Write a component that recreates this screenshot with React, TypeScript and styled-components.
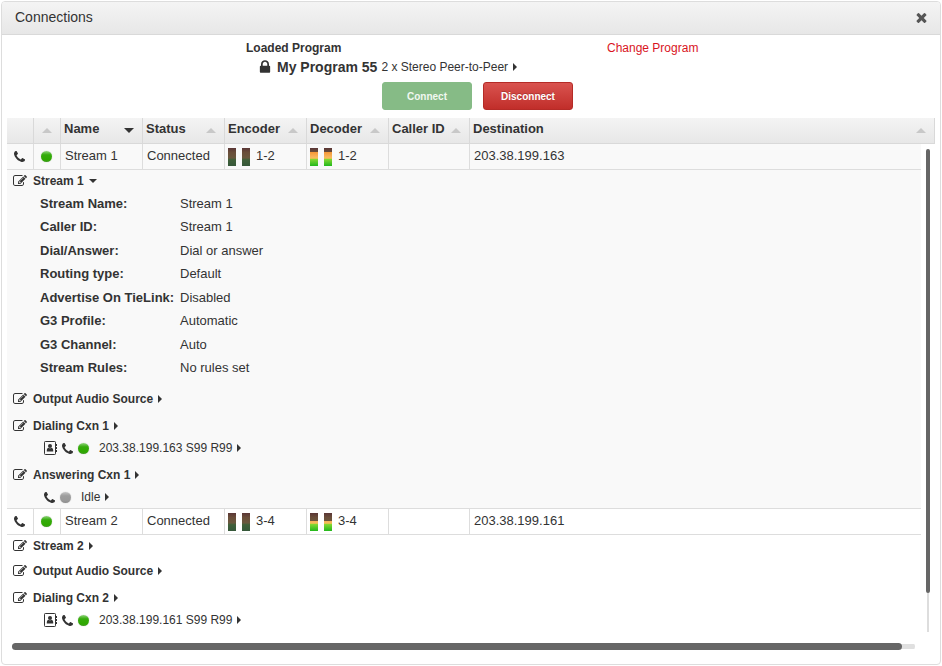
import React from "react";
import styled, { createGlobalStyle, css } from "styled-components";

const GlobalStyle = createGlobalStyle`
  *, *::before, *::after { box-sizing: border-box; }
  body {
    margin: 0;
    background: #fff;
    color: #333;
    font-family: "Liberation Sans", Arial, sans-serif;
    font-size: 12px;
    line-height: 20px;
  }
  button { font-family: inherit; cursor: pointer; }
`;

const Panel = styled.section`
  display: flex;
  flex-direction: column;
  min-height: calc(100vh - 2px);
  margin: 1px;
  border: 1px solid #ddd;
  border-radius: 4px;
  background: #fff;
`;

const TitleBar = styled.header`
  display: flex;
  align-items: center;
  justify-content: space-between;
  height: 33px;
  padding: 0 11px 2px 13px;
  border-bottom: 1px solid #d9d9d9;
  border-radius: 3px 3px 0 0;
  background: linear-gradient(#f4f4f4, #e7e7e7);
`;

const Title = styled.h1`
  margin: 0;
  font-size: 14px;
  font-weight: 400;
`;

const IconButton = styled.button`
  display: inline-flex;
  align-items: center;
  padding: 0;
  border: 0;
  background: none;
  color: inherit;
`;

const CloseButton = styled(IconButton)`
  color: #555;
`;

const ProgramArea = styled.div`
  display: grid;
  grid-template-columns: 361fr 333fr;
  padding: 3px 0 8px 244px;
`;

const ProgramLabel = styled.div`
  font-weight: 700;
`;

const ChangeLink = styled.a`
  justify-self: start;
  color: #d9141e;
  text-decoration: none;
`;

const ProgramLine = styled.div`
  display: flex;
  align-items: center;
  grid-column: 1 / -1;
  height: 18px;
  padding-left: 11px;
`;

const ProgramName = styled.strong`
  margin: 0 4px 0 4px;
  font-size: 14px;
`;

const ButtonRow = styled.div`
  display: flex;
  gap: 11px;
  grid-column: 1 / -1;
  padding: 6px 0 0 136px;
`;

const ActionButton = styled.button<{ $tone: "go" | "stop" }>`
  width: 90px;
  height: 28px;
  padding: 0;
  border-radius: 3px;
  color: #fff;
  font-size: 10px;
  font-weight: 700;
  ${({ $tone }) =>
    $tone === "go"
      ? css`
          border: 1px solid #86bb86;
          background: #86bb86;
          color: #f0f8f0;
        `
      : css`
          border: 1px solid #b52b27;
          background: linear-gradient(#d9534f, #c12e2a);
          text-shadow: 0 -1px 0 rgba(0, 0, 0, 0.2);
        `}
`;

const TableArea = styled.div`
  display: flex;
  flex: 1;
  flex-direction: column;
  padding: 0 5px 14px 5px;
`;

const Table = styled.table`
  width: 100%;
  border-collapse: separate;
  border-spacing: 0;
  table-layout: fixed;
  font-size: 13px;
`;

const HeadCell = styled.th`
  height: 26px;
  padding: 0 8px 4px 3px;
  border-right: 1px solid #d9d9d9;
  border-bottom: 1px solid #d9d9d9;
  background: linear-gradient(#f4f4f4, #e7e7e7);
  text-align: left;
  white-space: nowrap;
`;

const HeadContent = styled.div`
  display: flex;
  align-items: center;
  justify-content: space-between;
  height: 20px;
`;

const SortMark = styled.span<{ $active?: boolean }>`
  width: 0;
  height: 0;
  margin: 3px 0 0 auto;
  border: 5px solid transparent;
  ${({ $active }) =>
    $active
      ? css`
          border-top-color: #333;
          border-bottom-width: 0;
        `
      : css`
          border-bottom-color: #c8c8c8;
          border-top-width: 0;
        `}
`;

const Viewport = styled.div`
  display: flex;
  flex: 1;
  gap: 5px;
`;

const Rows = styled.div`
  flex: 1;
  min-width: 0;
`;

const Row = styled.tr<{ $shaded?: boolean }>`
  background: ${({ $shaded }) => ($shaded ? "#f9f9f9" : "#fff")};
`;

const Cell = styled.td`
  height: 26px;
  padding: 0 4px 2px;
  border-right: 1px solid #ddd;
  border-bottom: 1px solid #ddd;
  white-space: nowrap;
  &:last-child { border-right: 0; }
`;

const MeterCell = styled(Cell)`
  padding-left: 3px;
`;

const IconCell = styled(Cell)`
  padding: 0 1px 0 0;
  text-align: center;
  line-height: 0;
`;

const DetailCell = styled.td`
  padding: 0 6px;
  border-bottom: 1px solid #ddd;
  tr:last-child > & { border-bottom: 0; }
`;

const Lamp = styled.span<{ $on?: boolean }>`
  display: inline-block;
  flex: none;
  width: 11px;
  height: 11px;
  border-radius: 50%;
  background: ${({ $on }) =>
    $on
      ? "linear-gradient(#8fd47a 0, #35ab0c 35%, #2fa800 80%, #3f9c22)"
      : "linear-gradient(#c4c4c4 0, #9d9d9d 35%, #999 80%, #8c8c8c)"};
  box-shadow: 0 0 1px #aaa;
`;

const Meters = styled.span`
  display: flex;
  align-items: center;
  gap: 6px;
`;

const Meter = styled.span<{ $level: number }>`
  width: 8px;
  height: 18px;
  margin-top: 2px;
  background: linear-gradient(#f59a3a 25%, #f8b860 52%, #e8c24c 58%, #86d834 62%, #22b81c);
  &::before {
    content: "";
    display: block;
    height: ${({ $level }) => 100 - $level}%;
    background: linear-gradient(#5a3636, #6a4e3a 25%, #6a583e 55%, #40603a 65%, #36583a) top / 100% 18px no-repeat;
  }
`;

const Section = styled.div<{ $top: number }>`
  display: flex;
  align-items: center;
  gap: 6px;
  height: 22px;
  margin-top: ${({ $top }) => $top}px;
  font-size: 12px;
`;

const Toggle = styled.button`
  display: inline-flex;
  align-items: center;
  gap: 5px;
  padding: 0;
  border: 0;
  background: none;
  color: inherit;
  font-size: 12px;
  font-weight: 700;
  line-height: 20px;
`;

const PlainToggle = styled(Toggle)`
  font-weight: 400;
`;

const Connection = styled.div`
  display: flex;
  align-items: center;
  gap: 5px;
  height: 22px;
  padding-left: 31px;
`;

const Address = styled(PlainToggle)`
  margin-left: 5px;
`;

const Caret = styled.span<{ $open?: boolean }>`
  width: 0;
  height: 0;
  border: 4px solid transparent;
  ${({ $open }) =>
    $open
      ? css`
          border-top-color: currentColor;
          border-bottom-width: 0;
        `
      : css`
          border-left-color: currentColor;
          border-right-width: 0;
        `}
`;

const Properties = styled.dl`
  display: grid;
  grid-template-columns: 140px 1fr;
  grid-auto-rows: 1fr;
  align-items: center;
  min-height: 188px;
  margin: 0 0 0 27px;
  font-size: 13px;
`;

const Term = styled.dt`
  font-weight: 700;
`;

const Value = styled.dd`
  margin: 0;
`;

const VerticalTrack = styled.div`
  display: flex;
  flex: none;
  justify-content: center;
  width: 4px;
  margin: 5px 5px 0 0;
  background: linear-gradient(#ddd, #ddd) center / 2px 100% no-repeat;
`;

const VerticalThumb = styled.div`
  width: 4px;
  height: 92%;
  border-radius: 2px;
  background: #666;
`;

const HorizontalTrack = styled.div`
  height: 7px;
  margin: 11px 20px 0 5px;
  border-radius: 4px;
  background: linear-gradient(#e0e0e0, #e0e0e0) center / 100% 5px no-repeat;
`;

const HorizontalThumb = styled.div`
  width: calc(100% - 13px);
  height: 7px;
  border-radius: 4px;
  background: #666;
`;

const glyphs = {
  phone: {
    box: "192 128 1408 1408",
    path: "M1600 1240q0 27-10 70.5t-21 68.5q-21 50-122 106-94 51-186 51-27 0-53-3.5t-57.5-12.5-47-14.5-55.5-20.5-49-18q-98-35-175-83-127-79-264-216t-216-264q-48-77-83-175-3-9-18-49t-20.5-55.5-14.5-47-12.5-57.5-3.5-53q0-92 51-186 56-101 106-122 25-11 68.5-21t70.5-10q14 0 21 3 18 6 53 76 11 19 30 54t35 63.5 31 53.5q3 4 17.5 25t21.5 35.5 7 28.5q0 20-28.5 50t-62 55-62 53-28.5 46q0 9 5 22.5t8.5 20.5 14 24 11.5 19q76 137 174 235t235 174q2 1 19 11.5t24 14 20.5 8.5 22.5 5q18 0 46-28.5t53-62 55-62 50-28.5q14 0 28.5 7t35.5 21.5 25 17.5q25 15 53.5 31t63.5 35 54 30q70 35 76 53 3 7 3 21z",
  },
  edit: {
    box: "0 0 1792 1792",
    path: "M888 1184l116-116-152-152-116 116v56h96v96h56zm440-720q-16-16-33 1l-350 350q-17 17-1 33t33-1l350-350q17-17 1-33zm80 594v190q0 119-84.5 203.5t-203.5 84.5h-832q-119 0-203.5-84.5t-84.5-203.5v-832q0-119 84.5-203.5t203.5-84.5h832q63 0 117 25 15 7 18 23 3 17-9 29l-49 49q-14 14-32 8-23-6-45-6h-832q-66 0-113 47t-47 113v832q0 66 47 113t113 47h832q66 0 113-47t47-113v-126q0-13 9-22l64-64q15-15 35-7t20 29zm-96-738l288 288-672 672h-288v-288zm444 132l-92 92-288-288 92-92q28-28 68-28t68 28l152 152q28 28 28 68t-28 68z",
  },
  lock: {
    box: "0 0 1792 1792",
    path: "M640 768h512v-192q0-106-75-181t-181-75-181 75-75 181v192zm832 96v576q0 40-28 68t-68 28h-960q-40 0-68-28t-28-68v-576q0-40 28-68t68-28h32v-192q0-184 132-316t316-132 316 132 132 316v192h32q40 0 68 28t28 68z",
  },
  close: {
    box: "0 0 1792 1792",
    path: "M1490 1322q0 40-28 68l-136 136q-28 28-68 28t-68-28l-294-294-294 294q-28 28-68 28t-68-28l-136-136q-28-28-28-68t28-68l294-294-294-294q-28-28-28-68t28-68l136-136q28-28 68-28t68 28l294 294 294-294q28-28 68-28t68 28l136 136q28 28 28 68t-28 68l-294 294 294 294q28 28 28 68z",
  },
};

function Glyph({ name, size = 14 }: { name: keyof typeof glyphs; size?: number }) {
  return (
    <svg width={size} height={size} viewBox={glyphs[name].box} fill="currentColor" aria-hidden="true">
      <path d={glyphs[name].path} />
    </svg>
  );
}

function AddressBook() {
  return (
    <svg width="13" height="14" viewBox="0 0 13 14" aria-hidden="true">
      <rect x="0.5" y="0.5" width="11" height="13" rx="0.8" fill="none" stroke="#333" />
      <path d="M12 3h1v2h-1zM12 6h1v2h-1zM12 9h1v2h-1z" fill="#333" />
      <circle cx="6" cy="5" r="2" fill="#333" />
      <path d="M2.8 10.5V9q0-2 1.8-2.3Q6 7.8 7.4 6.7 9.2 7 9.2 9v1.5z" fill="#333" />
    </svg>
  );
}

const columns = [
  { label: "", width: 27 },
  { label: "", width: 27, sort: "idle", name: "State" },
  { label: "Name", width: 82, sort: "active" },
  { label: "Status", width: 82, sort: "idle" },
  { label: "Encoder", width: 82, sort: "idle" },
  { label: "Decoder", width: 82, sort: "idle" },
  { label: "Caller ID", width: 81, sort: "idle" },
  { label: "Destination", sort: "idle" },
];

const Col = styled.col<{ $width?: number }>`
  width: ${({ $width }) => ($width ? `${$width}px` : "auto")};
`;

function Columns() {
  return (
    <colgroup>
      {columns.map((column, index) => (
        <Col key={index} $width={column.width} />
      ))}
    </colgroup>
  );
}

const properties = [
  ["Stream Name:", "Stream 1"],
  ["Caller ID:", "Stream 1"],
  ["Dial/Answer:", "Dial or answer"],
  ["Routing type:", "Default"],
  ["Advertise On TieLink:", "Disabled"],
  ["G3 Profile:", "Automatic"],
  ["G3 Channel:", "Auto"],
  ["Stream Rules:", "No rules set"],
];

interface StreamProps {
  name: string;
  channels: string;
  level: number;
  address: string;
  shaded?: boolean;
}

function StreamRow({ name, channels, level, address, shaded }: StreamProps) {
  return (
    <Row $shaded={shaded}>
      <IconCell><Glyph name="phone" size={11} /></IconCell>
      <IconCell><Lamp $on /></IconCell>
      <Cell>{name}</Cell>
      <Cell>Connected</Cell>
      <MeterCell>
        <Meters><Meter $level={0} /><Meter $level={0} />{channels}</Meters>
      </MeterCell>
      <MeterCell>
        <Meters><Meter $level={level} /><Meter $level={level} />{channels}</Meters>
      </MeterCell>
      <Cell />
      <Cell>{address}</Cell>
    </Row>
  );
}

function EditSection({ label, top, open }: { label: string; top: number; open?: boolean }) {
  return (
    <Section $top={top}>
      <IconButton aria-label={`Edit ${label}`}><Glyph name="edit" /></IconButton>
      <Toggle aria-expanded={!!open}>{label}<Caret $open={open} /></Toggle>
    </Section>
  );
}

function DialingConnection({ address }: { address: string }) {
  return (
    <Connection>
      <AddressBook />
      <Glyph name="phone" size={11} />
      <Lamp $on />
      <Address>{address}<Caret /></Address>
    </Connection>
  );
}

export default function App() {
  return (
    <>
      <GlobalStyle />
      <Panel>
        <TitleBar>
          <Title>Connections</Title>
          <CloseButton aria-label="Close"><Glyph name="close" size={15} /></CloseButton>
        </TitleBar>
        <ProgramArea>
          <ProgramLabel>Loaded Program</ProgramLabel>
          <ChangeLink href="#program">Change Program</ChangeLink>
          <ProgramLine>
            <Glyph name="lock" size={16} />
            <ProgramName>My Program 55</ProgramName>
            <PlainToggle>2 x Stereo Peer-to-Peer<Caret /></PlainToggle>
          </ProgramLine>
          <ButtonRow>
            <ActionButton $tone="go" disabled>Connect</ActionButton>
            <ActionButton $tone="stop">Disconnect</ActionButton>
          </ButtonRow>
        </ProgramArea>
        <TableArea>
          <Table>
            <Columns />
            <thead>
              <tr>
                {columns.map((column, index) => (
                  <HeadCell key={index} scope="col" aria-label={column.name}>
                    <HeadContent>
                      {column.label}
                      {column.sort && <SortMark $active={column.sort === "active"} />}
                    </HeadContent>
                  </HeadCell>
                ))}
              </tr>
            </thead>
          </Table>
          <Viewport>
            <Rows>
              <Table>
                <Columns />
                <tbody>
                  <StreamRow name="Stream 1" channels="1-2" level={76} address="203.38.199.163" shaded />
                  <Row $shaded>
                    <DetailCell colSpan={8}>
                      <EditSection label="Stream 1" top={0} open />
                      <Properties>
                        {properties.map(([term, value]) => (
                          <React.Fragment key={term}>
                            <Term>{term}</Term>
                            <Value>{value}</Value>
                          </React.Fragment>
                        ))}
                      </Properties>
                      <EditSection label="Output Audio Source" top={8} />
                      <EditSection label="Dialing Cxn 1" top={5} />
                      <DialingConnection address="203.38.199.163 S99 R99" />
                      <EditSection label="Answering Cxn 1" top={5} />
                      <Connection>
                        <Glyph name="phone" size={11} />
                        <Lamp />
                        <Address>Idle<Caret /></Address>
                      </Connection>
                    </DetailCell>
                  </Row>
                  <StreamRow name="Stream 2" channels="3-4" level={54} address="203.38.199.161" />
                  <Row>
                    <DetailCell colSpan={8}>
                      <EditSection label="Stream 2" top={0} />
                      <EditSection label="Output Audio Source" top={3} />
                      <EditSection label="Dialing Cxn 2" top={5} />
                      <DialingConnection address="203.38.199.161 S99 R99" />
                    </DetailCell>
                  </Row>
                </tbody>
              </Table>
            </Rows>
            <VerticalTrack><VerticalThumb /></VerticalTrack>
          </Viewport>
          <HorizontalTrack><HorizontalThumb /></HorizontalTrack>
        </TableArea>
      </Panel>
    </>
  );
}
